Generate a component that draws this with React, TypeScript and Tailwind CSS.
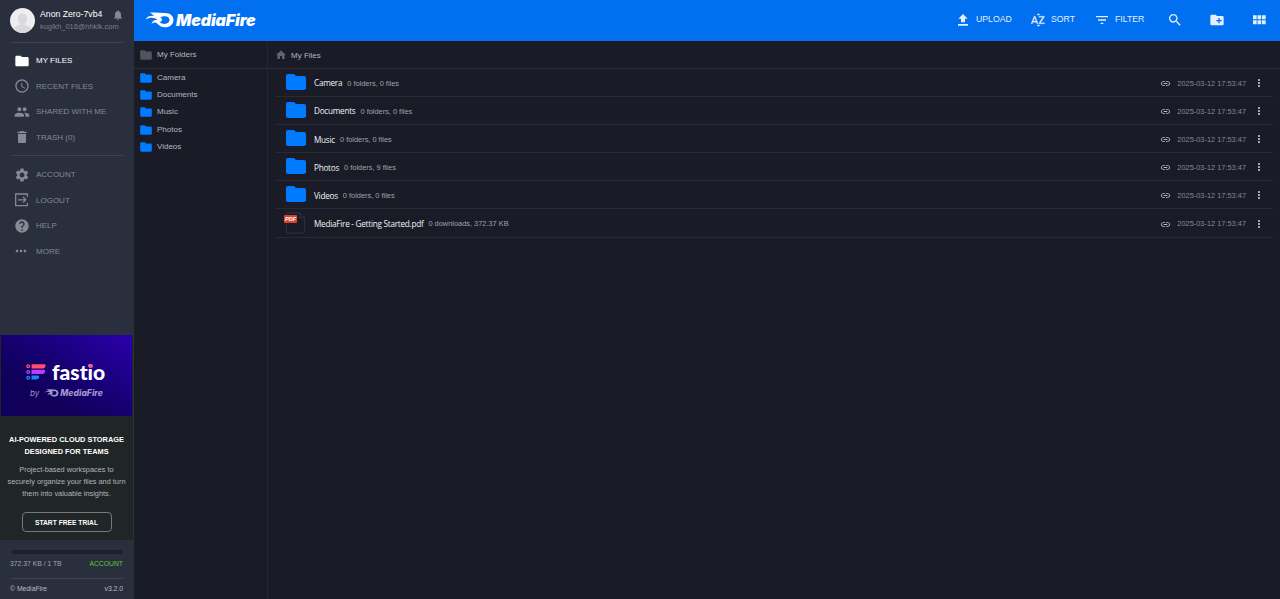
import type { ReactNode } from "react";
import {
  MdAccessTime,
  MdCreateNewFolder,
  MdDelete,
  MdFilterList,
  MdFolder,
  MdHelp,
  MdHome,
  MdLink,
  MdMoreHoriz,
  MdMoreVert,
  MdNotifications,
  MdPeople,
  MdSearch,
  MdSettings,
} from "react-icons/md";

const folders = ["Camera", "Documents", "Music", "Photos", "Videos"];

const files = [
  { name: "Camera", info: "0 folders, 0 files" },
  { name: "Documents", info: "0 folders, 0 files" },
  { name: "Music", info: "0 folders, 0 files" },
  { name: "Photos", info: "0 folders, 9 files" },
  { name: "Videos", info: "0 folders, 0 files" },
  { name: "MediaFire - Getting Started.pdf", info: "0 downloads, 372.37 KB", pdf: true },
];

const Flame = ({ className }: { className?: string }) => (
  <svg viewBox="0 0 28 16" className={className} fill="currentColor">
    <path
      fillRule="evenodd"
      d="M4 .8C9 0 14 .6 18 1c6-.6 10 2.400 10 6.900 0 4.400-3.800 7.300-8.300 7.300-4 0-6-1.700-8-3.800-1.500-1.300-3.700-1-5.700.6.8-3.200 3-4.500 6-4.300C8.500 5.200 4.500 5 0 7.500 1.800 4.300 5.200 3.500 8.800 4 7.300 2.400 5.700 1.500 4 .8zM19.500 4.200c-2 0-3.300.5-4.800 1.400 1.900.6 2.300 2 1.300 3.300-.7.8-1.600 1-2.300.9 1.700 1.500 3.300 2.200 5.500 2.200 2.800 0 4.800-1.600 4.800-3.900 0-2.400-1.900-3.900-4.500-3.900z"
    />
  </svg>
);

const UploadIcon = () => (
  <svg viewBox="0 0 24 24" className="size-4" fill="currentColor">
    <path d="M9 15.500h6V10h4l-7-7-7 7h4zM4.500 18h15v2.500h-15z" />
  </svg>
);

const SortIcon = () => (
  <svg viewBox="0 0 24 24" className="size-4" fill="currentColor" stroke="currentColor" strokeWidth=".4">
    <path d="M14.940 4.660h-4.720l2.360-2.360zm-4.690 14.710h4.660l-2.330 2.330zM6.100 6.270 1.600 17.730h1.840l.92-2.450h5.110l.92 2.450h1.840L7.740 6.270zm-1.130 7.370 1.940-5.180 1.940 5.180zm10.760 2.500h6.120v1.590h-8.530v-1.290l5.920-8.560h-5.880v-1.600h8.300v1.260z" />
  </svg>
);

const GridIcon = () => (
  <svg viewBox="0 0 24 24" className="ml-[26px] size-4" fill="currentColor">
    <path d="M3 11h5.500V5H3zm0 7.500h5.500v-6H3zm6.800 0h5.500v-6H9.800zm6.700 0H22v-6h-5.500zM9.800 11h5.500V5H9.800zm6.700-6v6H22V5z" />
  </svg>
);

const LogoutIcon = () => (
  <svg viewBox="0 0 24 24" fill="none" stroke="currentColor" strokeWidth="1.900">
    <path d="M20 7.500V3H2.500v17.500H20V16M6 11.700h11.500M13.500 7.500l4.200 4.200-4.200 4.200" />
  </svg>
);

const NavItem = ({ icon, label, active }: { icon: ReactNode; label: string; active?: boolean }) => (
  <li className={`flex h-[25.500px] items-center gap-[5px] ${active ? "text-white" : "text-[#858993]"}`}>
    <span className="-ml-px flex size-4 shrink-0 items-center justify-center [&>svg]:size-4">{icon}</span>
    <span className="ml-px pt-px text-[8px]">{label}</span>
  </li>
);

const Sidebar = () => (
  <aside className="flex w-[134px] shrink-0 flex-col bg-[#292f3d]">
    <div className="flex h-[42px] items-start pt-2 pl-[10px]">
      <div className="size-[25px] shrink-0 overflow-hidden rounded-full bg-[#eeeeef]">
        <svg viewBox="0 0 24 24" fill="#d9dadd">
          <ellipse cx="12" cy="10.500" rx="4.500" ry="5.500" />
          <path d="M3 22c1-5 5-5 7-6.500h4c2 1.500 6 1.500 7 6.500l-3 2H6z" />
        </svg>
      </div>
      <div className="ml-[5px] whitespace-nowrap">
        <p className="text-[8.700px] leading-[12px] text-white">Anon Zero-7vb4</p>
        <p className="mt-px text-[7.400px] leading-[12px] text-[#7b808c]">kuglkh_016@hhklk.com</p>
      </div>
      <MdNotifications className="-ml-[7px] mt-px size-3 shrink-0 text-[#858993]" />
    </div>
    <div className="mx-[11px] h-px bg-[#3d434f]" />
    <ul className="mt-[5px] ml-[15px]">
      <NavItem icon={<MdFolder />} label="MY FILES" active />
      <NavItem icon={<MdAccessTime />} label="RECENT FILES" />
      <NavItem icon={<MdPeople />} label="SHARED WITH ME" />
      <NavItem icon={<MdDelete />} label="TRASH (0)" />
    </ul>
    <div className="mx-[11px] mt-[5px] h-px bg-[#3d434f]" />
    <ul className="mt-[6px] ml-[15px]">
      <NavItem icon={<MdSettings />} label="ACCOUNT" />
      <NavItem icon={<LogoutIcon />} label="LOGOUT" />
      <NavItem icon={<MdHelp />} label="HELP" />
      <NavItem icon={<MdMoreHoriz className="-ml-[2px]" />} label="MORE" />
    </ul>

    <div className="mt-auto h-[205px] w-[133px] shrink-0 bg-[#202526] text-center">
      <div className="ml-px flex h-[81px] w-[131px] flex-col items-start bg-linear-to-bl from-[#2b00ac] via-[#15006f] to-[#10005b] to-70%">
        <div className="mt-[25px] ml-[25px] flex h-6 items-center">
          <svg viewBox="0 0 20 16" className="h-4 w-5">
            <g fill="none" strokeWidth="1.300">
              <circle cx="2.200" cy="2.200" r="1.400" stroke="#ff4e70" />
              <circle cx="2.200" cy="8" r="1.400" stroke="#b43cff" />
              <circle cx="2.200" cy="13.700" r="1.400" stroke="#1684ff" />
            </g>
            <path d="M6 .3h12.500q1.500 0 1 2-.5 2.200-2.500 2.200H5.500V1z" fill="#ff4e70" />
            <path d="M5.500 5.800h12.500q1.500 0 1 2.100t-2.500 2.200h-11z" fill="#c23bfa" />
            <path d="M5.500 11.500H12q1.500 0 1 2t-2.500 2H5.500z" fill="#1684ff" />
          </svg>
          <span className="relative ml-[6px] font-['Lato'] text-[21px] leading-6 font-black text-white [font-variant-ligatures:none]">
            fastio
            <i className="absolute top-[4px] right-[12px] size-[4px] rounded-full bg-[#ff4e70]" />
          </span>
        </div>
        <div className="mt-px ml-[29px] flex h-4 items-center text-[#a096c9]">
          <span className="font-['Inter'] text-[8px] italic">by</span>
          <Flame className="ml-[5px] h-2 w-[15px]" />
          <span className="ml-px font-['Inter'] text-[8.600px] font-extrabold italic">MediaFire</span>
        </div>
      </div>
      <h2 className="mt-[18px] text-[7.400px] leading-[11.500px] font-bold text-white">
        AI-POWERED CLOUD STORAGE
        <br />
        DESIGNED FOR TEAMS
      </h2>
      <p className="mt-[7px] text-[7.350px] leading-[11.900px] text-[#b5b7b9]">
        Project-based workspaces to
        <br />
        securely organize your files and turn
        <br />
        them into valuable insights.
      </p>
      <button className="mt-3 h-5 w-[90px] rounded-[4px] border border-[#73787a] pt-[3px] text-[6.700px] font-bold text-white">
        START FREE TRIAL
      </button>
    </div>

    <div className="h-[59px] shrink-0 px-[11px] pt-[10px] text-[6.800px] text-[#a2a6af]">
      <div className="h-1 rounded-sm bg-[#1b202c]" />
      <div className="-ml-px mt-[3px] flex h-[14px] items-center justify-between">
        <span>372.37 KB / 1 TB</span>
        <span className="text-[#62c63c]">ACCOUNT</span>
      </div>
      <div className="mt-[7px] h-px bg-[#3d434f]" />
      <div className="-ml-px mt-[3px] flex h-[14px] items-center justify-between text-[#b9bcc3]">
        <span>© MediaFire</span>
        <span>v3.2.0</span>
      </div>
    </div>
  </aside>
);

const Header = () => (
  <header className="flex h-[41px] shrink-0 items-center bg-[#0070f0] text-[#e2efff]">
    <div className="ml-[11px] flex items-center pb-px text-white">
      <Flame className="h-4 w-[29px]" />
      <span className="ml-[2px] font-['Inter'] text-[16px] font-black tracking-[-0.1px] italic">MediaFire</span>
    </div>
    <div className="mr-[13px] mb-[2px] ml-auto flex items-center text-[8.700px]">
      <UploadIcon />
      <span className="ml-[5px] w-9">UPLOAD</span>
      <span className="ml-[18px]"><SortIcon /></span>
      <span className="ml-[5px] w-[25px]">SORT</span>
      <MdFilterList className="ml-[18px] size-4" />
      <span className="ml-[5px] w-[30px]">FILTER</span>
      <MdSearch className="ml-[22px] size-4" />
      <MdCreateNewFolder className="ml-[26px] size-4" />
      <GridIcon />
    </div>
  </header>
);

const PdfIcon = () => (
  <span className="relative -ml-px flex h-6 w-[24px] shrink-0 items-center">
    <svg viewBox="0 0 24 24" className="ml-px size-6" fill="none" stroke="#303238">
      <path d="M2.500 1.500h14l5 5v14a2 2 0 0 1-2 2h-15a2 2 0 0 1-2-2zM16.500 1.500v5h5" />
    </svg>
    <span className="absolute top-1 left-px h-2 w-[13px] rounded-[1px] bg-[#dc4130] text-center text-[5.600px] leading-2 font-bold text-white italic">PDF</span>
  </span>
);

const App = () => {
  return (
    <div className="flex h-[599px] w-[1280px] overflow-hidden bg-[#191c26] font-['Liberation_Sans',sans-serif] leading-normal">
      <Sidebar />
      <div className="flex min-w-0 flex-1 flex-col">
        <Header />
        <div className="flex min-h-0 flex-1">
          <section className="w-[134px] border-r border-[#232630] text-[8px] text-[#b4b7be]">
            <div className="flex h-7 items-center border-b border-[#2b2e37] pt-px pl-[5px]">
              <MdFolder className="size-[14px] text-[#51545c]" />
              <span className="ml-1">My Folders</span>
            </div>
            {folders.map((folder) => (
              <div key={folder} className="flex h-[17.400px] items-center pl-[5px]">
                <MdFolder className="size-[14px] text-[#007bff]" />
                <span className="ml-1">{folder}</span>
              </div>
            ))}
          </section>
          <main className="min-w-0 flex-1">
            <div className="flex h-7 items-center border-b border-[#2b2e37] pt-[2px] pl-[7px] text-[8px] text-[#b4b7be]">
              <MdHome className="-mt-px size-3 text-[#62656d]" />
              <span className="ml-1">My Files</span>
            </div>
            <div className="mr-[7px] ml-2">
              {files.map((file) => (
                <div key={file.name} className="flex h-[28.100px] items-center border-b border-[#272a33] whitespace-nowrap">
                  <span className="ml-2 flex w-[30px]">
                    {file.pdf ? <PdfIcon /> : <MdFolder className="-mt-px size-6 text-[#007bff]" />}
                  </span>
                  <span className="pt-[2px] font-['Open_Sans'] text-[8.200px] font-medium tracking-[-0.260px] text-[#f0f1f3]">{file.name}</span>
                  <span className="ml-[5px] pt-[2px] text-[7.400px] text-[#a0a3ab]">{file.info}</span>
                  <MdLink className="mt-[2px] ml-auto size-[11px] text-[#b7bac1]" />
                  <span className="ml-[6px] pt-[2px] text-[7.400px] text-[#858993]">2025-03-12 17:53:47</span>
                  <MdMoreVert className="mt-px mr-[8px] ml-[7px] size-3 text-[#c5c7cd]" />
                </div>
              ))}
            </div>
          </main>
        </div>
      </div>
    </div>
  );
};

export default App;
